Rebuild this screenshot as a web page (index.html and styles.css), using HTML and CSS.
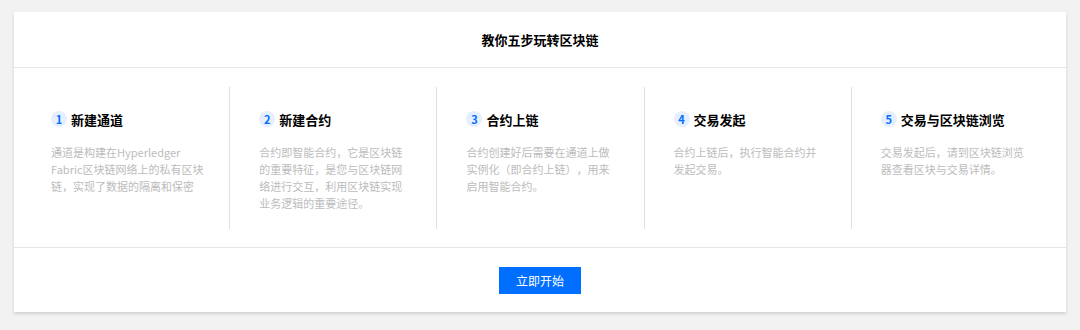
FILE: index.html
```html
<!DOCTYPE html>
<html lang="zh-CN">
<head>
<meta charset="utf-8">
<link rel="stylesheet" href="styles.css">
</head>
<body>
<div class="card">
  <div class="card-head">教你五步玩转区块链</div>
  <div class="steps">
    <div class="step">
      <div class="step-title"><span class="num">1</span><span>新建通道</span></div>
      <p class="desc">通道是构建在Hyperledger Fabric区块链网络上的私有区块链，实现了数据的隔离和保密</p>
    </div>
    <div class="step">
      <div class="step-title"><span class="num">2</span><span>新建合约</span></div>
      <p class="desc">合约即智能合约，它是区块链的重要特征，是您与区块链网络进行交互，利用区块链实现业务逻辑的重要途径。</p>
    </div>
    <div class="step">
      <div class="step-title"><span class="num">3</span><span>合约上链</span></div>
      <p class="desc">合约创建好后需要在通道上做实例化（即合约上链），用来启用智能合约。</p>
    </div>
    <div class="step">
      <div class="step-title"><span class="num">4</span><span>交易发起</span></div>
      <p class="desc">合约上链后，执行智能合约并发起交易。</p>
    </div>
    <div class="step">
      <div class="step-title"><span class="num">5</span><span>交易与区块链浏览</span></div>
      <p class="desc">交易发起后，请到区块链浏览器查看区块与交易详情。</p>
    </div>
  </div>
  <div class="card-foot">
    <button class="btn">立即开始</button>
  </div>
</div>
</body>
</html>
```

FILE: styles.css
```css
html, body {
  margin: 0;
  padding: 0;
}
body {
  background: #f2f2f2;
  padding: 12px 14px;
  font-family: "Noto Sans CJK SC", "Noto Sans", sans-serif;
  color: #000;
  text-spacing-trim: space-all;
}
.card {
  background: #fff;
  box-shadow: 0 2px 3px rgba(0, 0, 0, 0.14);
}
.card-head {
  height: 55px;
  display: flex;
  align-items: center;
  justify-content: center;
  font-size: 13px;
  font-weight: bold;
  border-bottom: 1px solid #e6e6e6;
}
.steps {
  display: grid;
  grid-template-columns: repeat(5, 1fr);
  padding: 19px 8px 18px;
  border-bottom: 1px solid #e6e6e6;
}
.step {
  height: 142px;
  padding: 24px 0 0 29px;
  box-sizing: border-box;
  border-left: 1px solid #e0e0e0;
}
.step:first-child {
  border-left: none;
}
.step-title {
  display: flex;
  align-items: center;
  gap: 4px;
  font-size: 13px;
  font-weight: bold;
  height: 16px;
}
.num {
  width: 16px;
  height: 16px;
  border-radius: 50%;
  background: #e6efff;
  color: #006eff;
  font-size: 11px;
  font-weight: 600;
  display: flex;
  align-items: center;
  justify-content: center;
}
.desc {
  margin: 17px 0 0;
  width: 153px;
  font-size: 11px;
  line-height: 17px;
  color: #bcbcbc;
  text-spacing-trim: space-all;
}
.card-foot {
  height: 64px;
  display: flex;
  align-items: center;
  justify-content: center;
}
.btn {
  width: 82px;
  height: 27px;
  border: none;
  background: #006eff;
  color: #fff;
  font-family: "Noto Sans CJK SC", "Noto Sans", sans-serif;
  font-size: 12px;
  padding: 0;
  margin-top: 1px;
}
```
